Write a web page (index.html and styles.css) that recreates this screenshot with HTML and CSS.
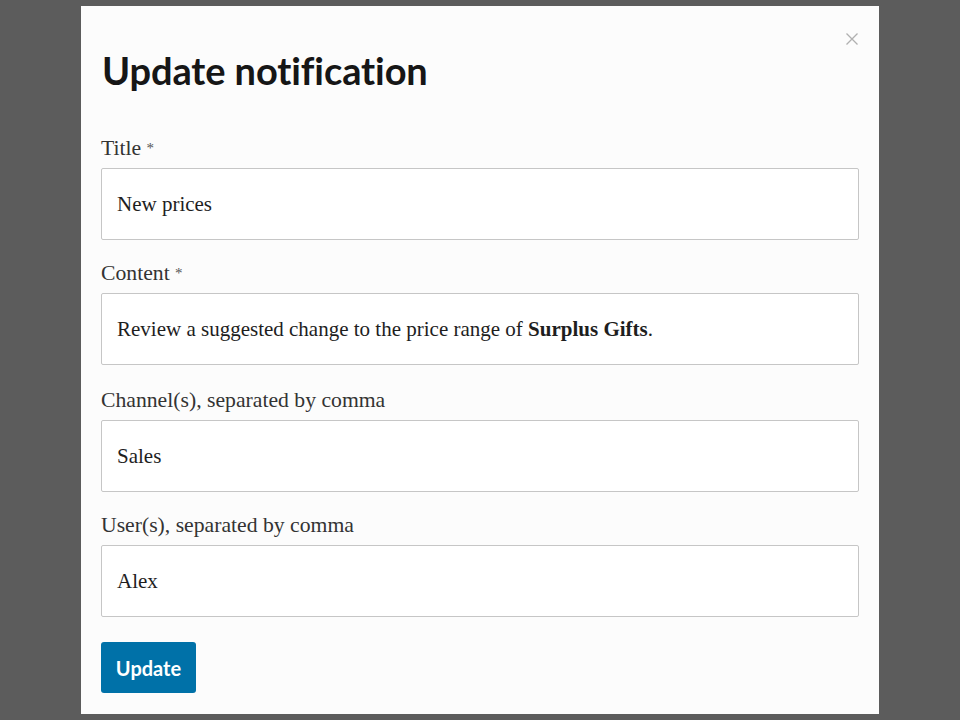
FILE: index.html
```html
<!DOCTYPE html>
<html lang="en">
<head>
<meta charset="utf-8">
<title>Update notification</title>
<link rel="stylesheet" href="styles.css">
</head>
<body>
<div class="overlay">
  <div class="modal">
    <button class="close" aria-label="Close">
      <svg width="12" height="12" viewBox="0 0 12 12"><path d="M0.5 0.5L11.5 11.5M11.5 0.5L0.5 11.5" stroke="#b0b0b0" stroke-width="1.3" fill="none"/></svg>
    </button>
    <h1 class="heading">Update notification</h1>
    <form class="form">
      <div class="field">
        <label class="label">Title <span class="req">*</span></label>
        <div class="input"><span class="value">New prices</span></div>
      </div>
      <div class="field">
        <label class="label">Content <span class="req">*</span></label>
        <div class="input"><span class="value">Review a suggested change to the price range of <b>Surplus Gifts</b>.</span></div>
      </div>
      <div class="field">
        <label class="label">Channel(s), separated by comma</label>
        <div class="input"><span class="value">Sales</span></div>
      </div>
      <div class="field">
        <label class="label">User(s), separated by comma</label>
        <div class="input"><span class="value">Alex</span></div>
      </div>
      <div class="actions">
        <button type="button" class="btn">Update</button>
      </div>
    </form>
  </div>
</div>
</body>
</html>
```
FILE: styles.css
```css
html, body {
  margin: 0;
  padding: 0;
  background: #5c5c5c;
}
.overlay {
  width: 960px;
  height: 720px;
  display: flex;
  justify-content: center;
  align-items: flex-start;
  padding-top: 6px;
  box-sizing: border-box;
}
.modal {
  position: relative;
  width: 798px;
  height: 708px;
  background: #fcfcfc;
  box-sizing: border-box;
  padding: 40px 20px 20px 21px;
}
.close {
  position: absolute;
  top: 27px;
  right: 21px;
  width: 12px;
  height: 12px;
  padding: 0;
  border: 0;
  background: none;
  display: flex;
}
.heading {
  margin: 0 0 41px 0;
  font-family: Lato, sans-serif;
  font-weight: 700;
  font-size: 38px;
  line-height: 48px;
  color: #161616;
  letter-spacing: -0.1px;
}
.form {
  display: flex;
  flex-direction: column;
}
.field {
  display: flex;
  flex-direction: column;
  gap: 7px;
  margin-bottom: 20px;
}
.field:nth-child(2) {
  margin-bottom: 22px;
}
.label {
  font-family: "Liberation Serif", serif;
  font-size: 21.7px;
  line-height: 26px;
  color: #333;
  margin-left: -1px;
}
.req {
  font-size: 15px;
  vertical-align: top;
  color: #555;
}
.input {
  height: 72px;
  box-sizing: border-box;
  border: 1px solid #c6c6c6;
  border-radius: 2px;
  background: #fff;
  padding: 0 15px;
  margin-left: -1px;
  font-family: "Liberation Serif", serif;
  font-size: 21px;
  line-height: 70px;
  color: #1e1e1e;
}
.input b {
  font-weight: 700;
}
.actions {
  display: flex;
  margin-top: 5px;
}
.btn {
  width: 95px;
  height: 51px;
  margin-left: -1px;
  border: 0;
  border-radius: 3px;
  background: #0071a8;
  color: #fff;
  font-family: Lato, sans-serif;
  font-weight: 700;
  font-size: 20px;
  padding: 0;
}
```
